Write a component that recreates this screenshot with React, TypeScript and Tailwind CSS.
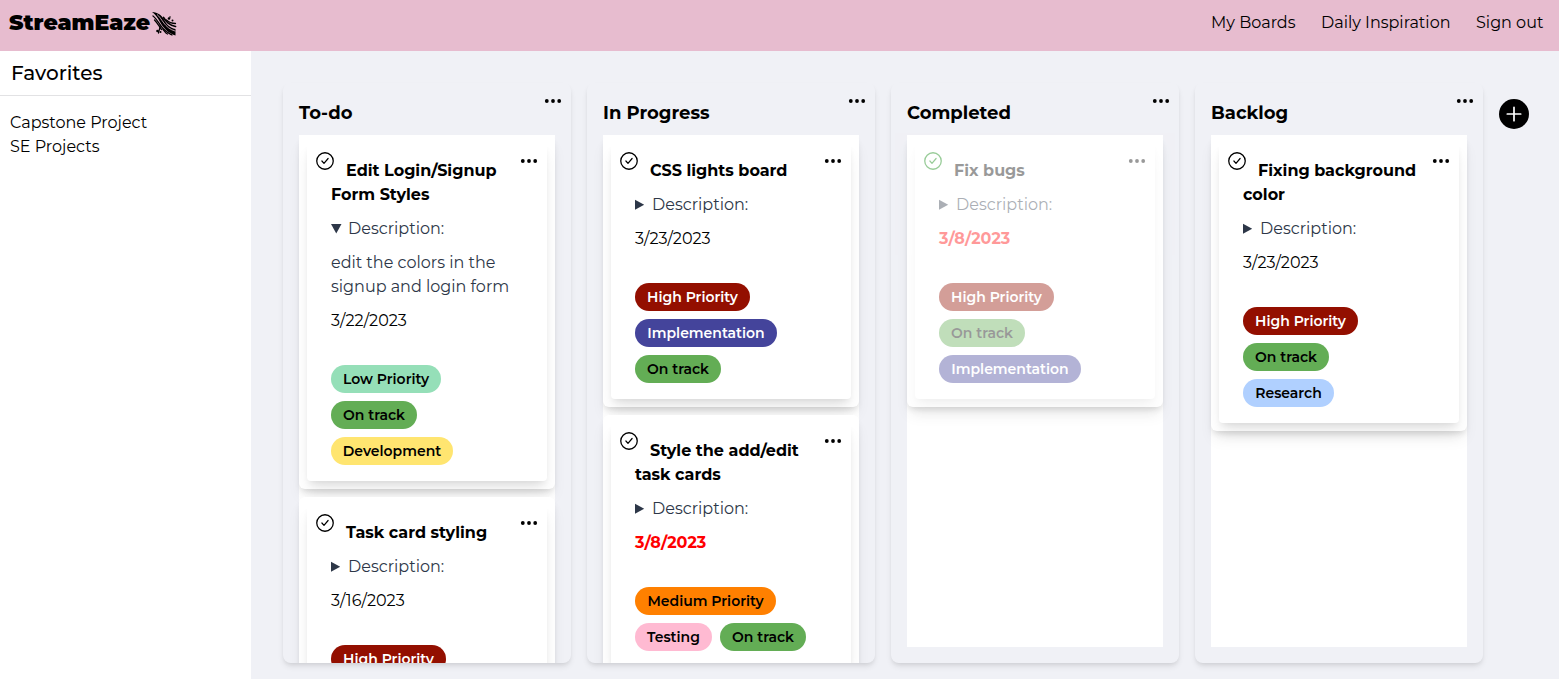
import React from "react";

type Tag = { label: string; cls: string };
type Task = { title: string; desc?: string; date: string; late?: boolean; done?: boolean; tags: Tag[] };

const HIGH: Tag = { label: "High Priority", cls: "w-[115px] bg-[#930f00] text-white" };
const MEDIUM: Tag = { label: "Medium Priority", cls: "w-[141px] bg-[#ff8000] text-black" };
const LOW: Tag = { label: "Low Priority", cls: "w-[110px] bg-[#95dfb8] text-black" };
const TRACK: Tag = { label: "On track", cls: "w-[86px] bg-[#63ad55] text-black" };
const DEV: Tag = { label: "Development", cls: "w-[122px] bg-[#ffe570] text-black" };
const IMPL: Tag = { label: "Implementation", cls: "w-[142px] bg-[#44449b] text-white" };
const TEST: Tag = { label: "Testing", cls: "w-[77px] bg-[#ffbad2] text-black" };
const RESEARCH: Tag = { label: "Research", cls: "w-[91px] bg-[#b0d0ff] text-black" };

const columns: { name: string; tasks: Task[] }[] = [
  {
    name: "To-do",
    tasks: [
      { title: "Edit Login/Signup Form Styles", desc: "edit the colors in the signup and login form", date: "3/22/2023", tags: [LOW, TRACK, DEV] },
      { title: "Task card styling", date: "3/16/2023", tags: [HIGH] },
    ],
  },
  {
    name: "In Progress",
    tasks: [
      { title: "CSS lights board", date: "3/23/2023", tags: [HIGH, IMPL, TRACK] },
      { title: "Style the add/edit task cards", date: "3/8/2023", late: true, tags: [MEDIUM, TEST, TRACK] },
    ],
  },
  { name: "Completed", tasks: [{ title: "Fix bugs", date: "3/8/2023", late: true, done: true, tags: [HIGH, TRACK, IMPL] }] },
  { name: "Backlog", tasks: [{ title: "Fixing background color", date: "3/23/2023", tags: [HIGH, TRACK, RESEARCH] }] },
];

function Dots() {
  return (
    <svg width="18" height="6" viewBox="0 0 18 6" fill="currentColor" className="block">
      <circle cx="2.800" cy="3" r="1.900" />
      <circle cx="9" cy="3" r="1.900" />
      <circle cx="15.200" cy="3" r="1.900" />
    </svg>
  );
}

function Check() {
  return (
    <svg width="20" height="20" viewBox="0 0 20 20" fill="none" stroke="currentColor" strokeLinecap="round" strokeLinejoin="round" className="block">
      <circle cx="10" cy="10" r="8.250" strokeWidth="1.300" />
      <path d="M6.900 10l2.100 2.300 4.100-4.800" strokeWidth="1.200" />
    </svg>
  );
}

function Logo() {
  return (
    <svg width="25" height="26" viewBox="0 0 25 26" className="mt-px block">
      <path d="M0 1C6 1.500 9.500 4 12 8.500C14.500 13.500 18 17 23.500 18V24.500C17.500 22.500 14 19.500 10.500 15C7.500 10.500 5.500 5 0 1Z" fill="#000" />
      <g fill="none" stroke="#000" strokeWidth="1.300" strokeLinecap="round">
        <path d="M1 5C5 8 7 13 11 17.500S17 22.500 20 24" />
        <path d="M2.500 9C5 11.500 7 15 9.500 18.500" />
        <path d="M11.500 6.500C14.500 11 17 14 23.500 15.500" strokeWidth="1.700" />
        <path d="M14.500 9C17 11.500 20 12.500 23.500 12.500" />
        <path d="M8 15C8.500 18 6.500 19 6.500 22" />
        <path d="M11 18.500C13 20.500 13 22 15.500 23" />
      </g>
      <g fill="none" stroke="#e7bccf" strokeWidth=".8">
        <path d="M5 3.500C10 7 12 17 23.500 20.200" />
      </g>
      <circle cx="17" cy="7.500" r="1.300" />
      <circle cx="20.500" cy="9.500" r="1" />
      <circle cx="18" cy="6" r=".8" />
      <circle cx="5.500" cy="20" r="1.300" />
      <circle cx="8.500" cy="21" r="1" />
    </svg>
  );
}

function Card({ task }: { task: Task }) {
  return (
    <div className="rounded-[6px] bg-white p-2 shadow-[0_10px_15px_-3px_rgba(0,0,0,0.08),0_4px_6px_-2px_rgba(0,0,0,0.12)]">
      <div className={`rounded-[4px] bg-white shadow-[0_10px_15px_-3px_rgba(0,0,0,0.1),0_4px_6px_-2px_rgba(0,0,0,0.07)] ${task.done ? "opacity-40" : ""}`}>
        <div className="relative px-6 pt-4 pb-4 leading-6">
          <div className={`absolute top-2 left-2 ${task.done ? "text-[#008000]" : "text-black"}`}><Check /></div>
          <div className="absolute top-[15px] right-[9px] text-black"><Dots /></div>
          <h3 className="w-[180px] indent-[15px] text-[16px] font-bold text-black">{task.title}</h3>
          <div className="mt-[10px] flex items-center text-[16px] text-[#2d3748]">
            <svg width="11" height="12" viewBox="0 0 11 12" fill="currentColor" className="mr-[6px]">
              {task.desc ? <path d="M0 1h10.500L5.250 10.500z" /> : <path d="M0 .8l9.200 5-9.200 5z" />}
            </svg>
            Description:
          </div>
          {task.desc && <p className="mt-[10px] w-[190px] text-[16px] text-[#2d3748]">{task.desc}</p>}
          <div className={`mt-[10px] text-[16px] ${task.late ? "font-bold text-[#ff0000]" : "text-black"}`}>{task.date}</div>
          <div className="mt-8 flex w-[180px] flex-wrap gap-2">
            {task.tags.map((t) => (
              <span key={t.label} className={`flex h-7 items-center justify-center rounded-full text-[14px] font-semibold whitespace-nowrap ${t.cls}`}>{t.label}</span>
            ))}
          </div>
        </div>
      </div>
    </div>
  );
}

export default function App() {
  return (
    <div className="flex h-[679px] w-[1559px] flex-col overflow-hidden bg-[#f0f1f6] font-[Montserrat,Inter,sans-serif] text-black">
      <header className="flex h-[51px] shrink-0 items-start justify-between bg-[#e7bccf] pt-[10px] pr-[14px] pl-[9px]">
        <div className="flex">
          <span className="w-[143px] text-[22px] leading-[25px] font-black">StreamEaze</span>
          <Logo />
        </div>
        <nav className="flex pt-px text-[16px] leading-6">
          <span className="mr-[26px] w-[84px] whitespace-nowrap">My Boards</span>
          <span className="mr-[26px] w-[129px] whitespace-nowrap">Daily Inspiration</span>
          <span className="w-[69px] whitespace-nowrap">Sign out</span>
        </nav>
      </header>
      <div className="flex min-h-0 flex-1">
        <aside className="w-[251px] shrink-0 bg-white">
          <h2 className="h-[45px] border-b border-[#e2e2e4] pl-[11px] text-[20px] leading-[44px] font-medium">Favorites</h2>
          <ul className="pt-[15px] pl-[10px] text-[16px] leading-6">
            <li>Capstone Project</li>
            <li>SE Projects</li>
          </ul>
        </aside>
        <main className="flex flex-1 items-start gap-4 pt-8 pl-8">
          {columns.map((c) => (
            <section key={c.name} className="flex h-[580px] w-72 shrink-0 flex-col overflow-hidden rounded-lg px-4 shadow-[0_4px_6px_-1px_rgba(0,0,0,0.1),0_2px_4px_-1px_rgba(0,0,0,0.06)]">
              <div className="flex h-[52px] shrink-0 justify-between">
                <h2 className="pt-4 text-[18px] leading-7 font-bold">{c.name}</h2>
                <div className="-mr-[7px] pt-[15px]"><Dots /></div>
              </div>
              <div className="mb-4 h-[512px] shrink-0 bg-white">
                {c.tasks.map((t, i) => (
                  <div key={t.title} className={i ? "pt-2" : ""}><Card task={t} /></div>
                ))}
              </div>
            </section>
          ))}
          <button className="mt-4 flex size-[30px] items-center justify-center rounded-full bg-black">
            <svg width="16" height="16" viewBox="0 0 16 16" stroke="white" strokeWidth="1.700" strokeLinecap="round"><path d="M8 1.300v13.400M1.300 8h13.400" /></svg>
          </button>
        </main>
      </div>
    </div>
  );
}
